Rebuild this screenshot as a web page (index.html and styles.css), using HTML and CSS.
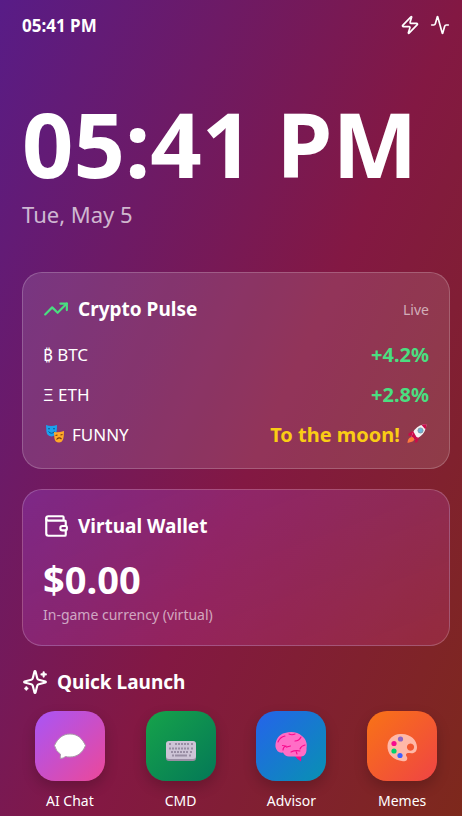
FILE: index.html
```html
<!DOCTYPE html>
<html lang="en">
<head>
<meta charset="utf-8">
<meta name="viewport" content="width=device-width, initial-scale=1">
<title>Home</title>
<link rel="stylesheet" href="styles.css">
</head>
<body>
<div class="screen">
  <header class="status">
    <span class="status-time">05:41 PM</span>
    <div class="status-icons">
      <svg class="icon icon-sm" viewBox="0 0 24 24"><path d="M4 14a1 1 0 0 1-.78-1.63l9.9-10.2a.5.5 0 0 1 .86.46l-1.92 6.02A1 1 0 0 0 13 10h7a1 1 0 0 1 .78 1.63l-9.9 10.2a.5.5 0 0 1-.86-.46l1.92-6.02A1 1 0 0 0 11 14z"/></svg>
      <svg class="icon icon-sm" viewBox="0 0 24 24"><path d="M22 12h-2.48a2 2 0 0 0-1.93 1.46l-2.35 8.36a.25.25 0 0 1-.48 0L9.24 2.18a.25.25 0 0 0-.48 0l-2.35 8.36A2 2 0 0 1 4.49 12H2"/></svg>
    </div>
  </header>

  <main>
    <section class="clock">
      <h1 class="clock-time">05:41 PM</h1>
      <p class="clock-date">Tue, May 5</p>
    </section>

    <section class="card">
      <div class="card-head">
        <svg class="icon icon-green" viewBox="0 0 24 24"><path d="M22 7 13.5 15.5 8.5 10.5 2 17"/><path d="M16 7h6v6"/></svg>
        <h2 class="title">Crypto Pulse</h2>
        <span class="live">Live</span>
      </div>
      <ul class="coins">
        <li class="coin"><span>₿ BTC</span><strong class="up">+4.2%</strong></li>
        <li class="coin"><span>Ξ ETH</span><strong class="up">+2.8%</strong></li>
        <li class="coin">
          <span class="with-emoji">
            <svg class="emoji" viewBox="0 0 24 24">
              <path fill="#1ba0ee" d="M3 3q5 2 11 0 0 4-.5 7-1 4-5 4.500Q4 14 3.400 9.500Z"/>
              <path fill="none" stroke="#075a96" stroke-width="1" d="M5 7q1-1 2 0M10 7q1-1 2 0M5.500 9.500q3 3.500 6 0"/>
              <path fill="#ffa928" d="M11 10q4 1 10-1 0 5-.8 8-1.200 3.500-4.200 3.500-4 0-4.600-4.500Z"/>
              <path fill="none" stroke="#7a3a0c" stroke-width="1.100" d="M12.500 13.500l2-.5M17.500 13l2-.5M13.500 17.500q2.500-3 5-.5"/>
            </svg>
            FUNNY
          </span>
          <strong class="moon">To the moon!
            <svg class="emoji" viewBox="0 0 24 24">
              <path fill="#ca0b4a" d="M8 9 3.500 11.500 3.500 14 8 13.500ZM14.500 15 12 20.500 10 20.500 10.500 15.500Z"/>
              <path fill="#f4f4f4" d="M6.500 14.500Q9 6 15 3.500q3.500-1.500 6.500-1-.3 3.500-2 7Q17 14.500 9.500 17.500Z"/>
              <path fill="#ca0b4a" d="M16.500 3q2.500-1 5-.7 0 2.700-1 5.200ZM6.500 14.500l2-5 1.500 3 1.500 2.500 2.500 1-4.500 1.700Z"/>
              <circle cx="15.500" cy="8.500" r="2.600" fill="#6db3d8" stroke="#83909b" stroke-width=".8"/>
              <path fill="#ff7a3d" d="M5 15.500q3-1.500 4 1 .5 3-3 3.500L2.500 21Q2.500 17 5 15.500Z"/>
            </svg>
          </strong>
        </li>
      </ul>
    </section>

    <section class="card card-wallet">
      <div class="card-head">
        <svg class="icon" viewBox="0 0 24 24"><path d="M19 7V4a1 1 0 0 0-1-1H5a2 2 0 0 0 0 4h15a1 1 0 0 1 1 1v4h-3a2 2 0 0 0 0 4h3a1 1 0 0 0 1-1v-2a1 1 0 0 0-1-1"/><path d="M3 5v14a2 2 0 0 0 2 2h15a1 1 0 0 0 1-1v-4"/></svg>
        <h2 class="title">Virtual Wallet</h2>
      </div>
      <p class="balance">$0.00</p>
      <p class="note">In-game currency (virtual)</p>
    </section>

    <section class="launch">
      <div class="launch-head">
        <svg class="icon" viewBox="0 0 24 24"><path d="M9.937 15.500A2 2 0 0 0 8.500 14.063l-6.135-1.582a.5.5 0 0 1 0-.962L8.500 9.936A2 2 0 0 0 9.937 8.500l1.582-6.135a.5.5 0 0 1 .963 0L14.063 8.500A2 2 0 0 0 15.500 9.937l6.135 1.581a.5.5 0 0 1 0 .964L15.500 14.063a2 2 0 0 0-1.437 1.437l-1.582 6.135a.5.5 0 0 1-.963 0z"/><path d="M20 3v4M22 5h-4M4 17v2M5 18H3"/></svg>
        <h2 class="title">Quick Launch</h2>
      </div>
      <div class="apps">
        <button class="app" type="button">
          <span class="tile tile-chat">
            <svg class="glyph" viewBox="0 0 36 36"><path fill="#fff" stroke="#a99aa9" stroke-width="1" d="M18 6C26 6 30.500 11 33.500 17.500 30.500 25 25 29 18 29q-2.500 0-4.500-.5-2 2-5.300 2 .3-2 .2-4.500Q4 23.500 2.500 17.500C6 10 11 6 18 6Z"/></svg>
          </span>
          <span class="app-name">AI Chat</span>
        </button>
        <button class="app" type="button">
          <span class="tile tile-cmd">
            <svg class="glyph" viewBox="0 0 36 36">
              <rect x="3" y="14" width="30" height="19" rx="3" fill="#998ea4"/>
              <rect x="3" y="13" width="30" height="18" rx="3" fill="#cdc4d6"/>
              <path fill="none" stroke="#998ea4" stroke-width="2" d="M6 16h2M12 16h2M15 16h2M18 16h2M21 16h2M24 16h2M28 16h2M6 20.500h2M9 20.500h2M12 20.500h2M15 20.500h2M18 20.500h2M21 20.500h2M24 20.500h2M28 20.500h2M8 24h2M11 24h2M14 24h2M17 24h2M20 24h2M23 24h2M27 24h2M9 27.500h2M12 27.500h12M26 27.500h2"/>
            </svg>
          </span>
          <span class="app-name">CMD</span>
        </button>
        <button class="app" type="button">
          <span class="tile tile-advisor">
            <svg class="glyph" viewBox="0 0 36 36">
              <path fill="#f70a8d" d="M21 27h7.500l-.5 6.500Q24 31 21 27Z"/>
              <path fill="#ff6dc6" d="M2.500 19C2 12 6 6 12 5c6-2 13-1 17 3 4 3 5.500 8 4.500 12 .5 5-2 8.500-5.500 8.500H16q-4 0-6-4-6 1-7.500-5.500Z"/>
              <path fill="none" stroke="#f70a8d" stroke-width="1.100" stroke-linecap="round" d="M5 14q2-5 7-6M10 22q0-3 3-4M9.500 17.500q3 0 4 1.500l4-1M16 6q3 1.500 6 0M22 13q4 0 6-4M32 17q-4 1-5 4M18 24q4-2 9-1M24 26l-1-3"/>
            </svg>
          </span>
          <span class="app-name">Advisor</span>
        </button>
        <button class="app" type="button">
          <span class="tile tile-memes">
            <svg class="glyph" viewBox="0 0 36 36">
              <path fill="#ffb8a8" fill-rule="evenodd" d="M16 6c10-1 17 6 17 13 0 5-3 7-7 6-4-.5-5 1.500-3 4 1 3-1 4.500-4 4.300C9 32 3 26 3.500 17.500 4 11 9 6.500 16 6ZM26.500 15.500a3.600 3.600 0 1 0 .01 0Z"/>
              <circle cx="16.500" cy="11" r="2.600" fill="#8d65c5"/>
              <circle cx="10" cy="15.500" r="2.600" fill="#f70a8d"/>
              <circle cx="10" cy="23" r="2.600" fill="#00d26a"/>
              <circle cx="16" cy="27.500" r="2.600" fill="#3f5fff"/>
            </svg>
          </span>
          <span class="app-name">Memes</span>
        </button>
      </div>
    </section>
  </main>
</div>
</body>
</html>
```
FILE: styles.css
```css
* {
  box-sizing: border-box;
}

body,
h1,
h2,
p,
ul {
  margin: 0;
  padding: 0;
}

body {
  font-family: "Noto Sans", "Open Sans", sans-serif;
  font-size: 16px;
  color: #fff;
}

.screen {
  min-height: 100vh;
  padding: 12px 12px 0 22px;
  background: linear-gradient(to bottom right, #581c87, #831843, #7c2d12) no-repeat;
  background-size: 100% 125%;
}

.status {
  display: flex;
  align-items: center;
  justify-content: space-between;
  height: 26px;
}

.status-time {
  font-size: 17px;
  font-weight: 700;
}

.status-icons {
  display: flex;
  gap: 10px;
}

.icon {
  flex: none;
  width: 26px;
  height: 26px;
  fill: none;
  stroke: currentColor;
  stroke-width: 2;
  stroke-linecap: round;
  stroke-linejoin: round;
}

.icon-sm {
  width: 20px;
  height: 20px;
}

.icon-green {
  color: #4ade80;
}

.clock {
  padding: 60px 0 42px;
}

.clock-time {
  font-size: 90px;
  font-weight: 700;
  line-height: 90px;
  white-space: nowrap;
}

.clock-date {
  margin-top: 10px;
  font-size: 22px;
  line-height: 32px;
  color: rgba(255, 255, 255, 0.7);
}

.card {
  margin-bottom: 20px;
  padding: 20px;
  border: 1px solid rgba(255, 255, 255, 0.2);
  border-radius: 20px;
  background: rgba(255, 255, 255, 0.12);
}

.card-wallet {
  background: linear-gradient(to bottom right, rgba(168, 85, 247, 0.25), rgba(236, 72, 153, 0.2));
}

.card-head,
.launch-head {
  display: flex;
  align-items: center;
  gap: 9px;
  height: 32px;
}

.title {
  font-size: 19px;
  font-weight: 700;
  line-height: 32px;
}

.live {
  margin-left: auto;
  font-size: 14px;
  color: rgba(255, 255, 255, 0.6);
}

.coins {
  margin-top: 9px;
  list-style: none;
}

.coin {
  display: flex;
  align-items: center;
  justify-content: space-between;
  height: 40px;
  font-size: 17px;
}

.coin:last-child {
  margin-bottom: -6px;
}

.coin strong {
  display: flex;
  align-items: center;
  gap: 5px;
  font-size: 20px;
}

.with-emoji {
  display: flex;
  align-items: center;
  gap: 5px;
}

.emoji {
  width: 24px;
  height: 24px;
}

.up {
  color: #4ade80;
}

.moon {
  color: #facc15;
}

.balance {
  margin-top: 11px;
  font-size: 38px;
  font-weight: 700;
  line-height: 52px;
}

.note {
  font-size: 14px;
  line-height: 20px;
  color: rgba(255, 255, 255, 0.6);
}

.apps {
  display: grid;
  grid-template-columns: repeat(4, 1fr);
  gap: 15px;
  margin-top: 13px;
}

.app {
  display: flex;
  flex-direction: column;
  align-items: center;
  gap: 10px;
  padding: 0;
  border: 0;
  background: none;
  color: inherit;
  font: inherit;
  cursor: pointer;
}

.tile {
  display: grid;
  place-items: center;
  width: 70px;
  height: 70px;
  border-radius: 20px;
  box-shadow: 0 6px 14px rgba(0, 0, 0, 0.2);
}

.tile-chat {
  background: linear-gradient(135deg, #a855f7, #ec4899);
}

.tile-cmd {
  background: linear-gradient(135deg, #16a34a, #047857);
}

.tile-advisor {
  background: linear-gradient(135deg, #2563eb, #0891b2);
}

.tile-memes {
  background: linear-gradient(135deg, #f97316, #ef4444);
}

.glyph {
  width: 36px;
  height: 36px;
}

.app-name {
  font-size: 14px;
  line-height: 20px;
}
```
